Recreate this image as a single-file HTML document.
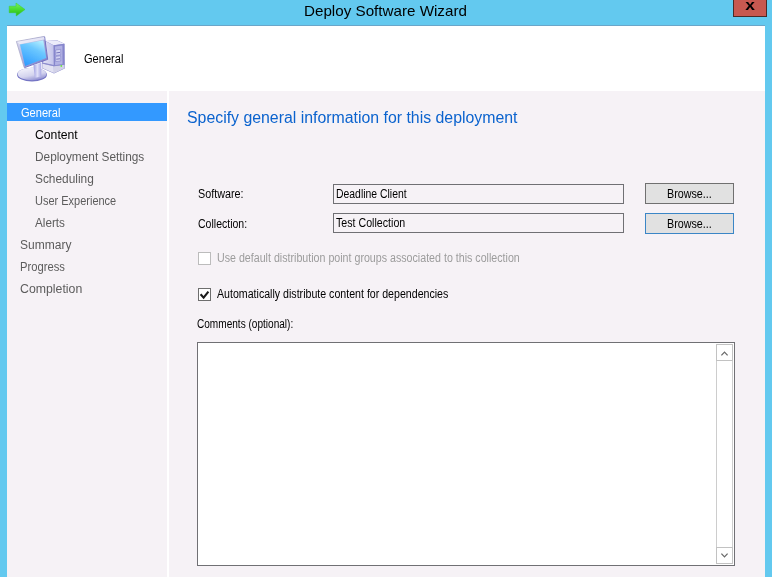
<!DOCTYPE html>
<html><head><meta charset="utf-8"><title>Deploy Software Wizard</title>
<style>
*{box-sizing:border-box;margin:0;padding:0}
html,body{width:772px;height:577px;overflow:hidden;background:#63c9ef;font-family:"Liberation Sans",sans-serif;}
.abs{position:absolute}
.tx{white-space:nowrap;line-height:1;transform-origin:0 0}
#frame{left:0;top:0;width:772px;height:577px;background:#63c9ef}
#topline{left:7px;top:25px;width:758px;height:1px;background:#6aa6c9}
#close{left:733px;top:0;width:34px;height:17px;background:#c75850;border:1px solid #4a2a28;border-top:none}
#header{left:7px;top:26px;width:758px;height:65px;background:#fff}
#body{left:7px;top:91px;width:758px;height:486px;background:#f6f2f6}
#divider{left:167px;top:91px;width:2px;height:486px;background:#fff}
#sel{left:7px;top:103px;width:160px;height:18px;background:#3399ff}
.inp{border:1px solid #707074}
.btn{background:#e1e1e1;border:1px solid #707070}
</style></head><body>
<div id="frame" class="abs"></div>
<div id="topline" class="abs"></div>
<svg id="arrow" class="abs" style="left:4px;top:0px" width="30" height="22" viewBox="4 0 30 22"><defs><linearGradient id="garr" x1="0" y1="0" x2="0" y2="1"><stop offset="0" stop-color="#78f066"/><stop offset="0.5" stop-color="#48dc30"/><stop offset="1" stop-color="#26b416"/></linearGradient><filter id="asoft"><feGaussianBlur stdDeviation="0.35"/></filter></defs><path filter="url(#asoft)" d="M9.2 6.2H16V3L25 9.5 16.2 16V12.7H9.2z" fill="url(#garr)" stroke="#3ccc28" stroke-width="0.5" stroke-linejoin="round"/></svg>
<div id="close" class="abs"></div>
<div id="closex" class="abs" style="left:733px;top:-5px;width:34px;text-align:center;font-weight:bold;font-size:15px;line-height:20px;color:#000;transform:scaleX(1.16)">x</div>
<div id="header" class="abs"></div>
<div id="body" class="abs"></div>
<svg id="pcicon" class="abs" style="left:12px;top:32px" width="60" height="56" viewBox="12 32 60 56">
<defs>
<linearGradient id="gscr" x1="0.75" y1="0" x2="0.25" y2="1"><stop offset="0" stop-color="#b4efff"/><stop offset="0.35" stop-color="#6cc8ff"/><stop offset="1" stop-color="#2f9cff"/></linearGradient>
<linearGradient id="gfrm" x1="0" y1="0" x2="1" y2="1"><stop offset="0" stop-color="#e4e4f4"/><stop offset="1" stop-color="#7474c4"/></linearGradient>
<linearGradient id="gbase" x1="0.2" y1="0" x2="0.7" y2="1"><stop offset="0" stop-color="#f4f4fc"/><stop offset="0.6" stop-color="#d4d4ee"/><stop offset="1" stop-color="#8c8cd0"/></linearGradient>
<linearGradient id="gneck" x1="0" y1="0" x2="1" y2="0"><stop offset="0" stop-color="#9c9ce0"/><stop offset="0.5" stop-color="#e0e0f8"/><stop offset="1" stop-color="#a8a8e4"/></linearGradient>
<linearGradient id="gside" x1="0" y1="0" x2="1" y2="0"><stop offset="0" stop-color="#e6e6f6"/><stop offset="1" stop-color="#c2c2ea"/></linearGradient>
<linearGradient id="gfront" x1="0" y1="0" x2="1" y2="0"><stop offset="0" stop-color="#b4b4e6"/><stop offset="1" stop-color="#8484cc"/></linearGradient>
<filter id="soft" x="-5%" y="-5%" width="110%" height="110%"><feGaussianBlur stdDeviation="0.45"/></filter>
</defs>
<g filter="url(#soft)">
<!-- tower -->
<path d="M45.3 41 L57 40.3 L64.6 43.8 L64.8 68.5 L54 73.6 L42 68.2 L42 60 Z" fill="#8a8acc"/>
<path d="M45.5 41 L57 40.5 L64.3 43.8 L53.6 45.2 Z" fill="#ececfa"/>
<path d="M45.5 41.2 L53.6 45.3 L53.8 65 L42.5 62.5 L46 58 Z" fill="url(#gside)"/>
<path d="M53.8 45.3 L64.2 44 L64.3 65.3 L53.9 66.8 Z" fill="#8686cc"/>
<path d="M55 46.6 L62.4 45.6 L62.5 64.2 L55.1 65.3 Z" fill="#b2b2e4"/>
<path d="M55.6 50 L60.7 49.3 L60.7 54.8 L55.6 55.4 Z" fill="#d2d2f2" stroke="#7676c0" stroke-width="0.5"/>
<path d="M55.6 56.4 L60.7 55.8 L60.7 61 L55.6 61.5 Z" fill="#d2d2f2" stroke="#7676c0" stroke-width="0.5"/>
<path d="M56.3 52.9 L60 52.4 M56.3 59.2 L60 58.8" stroke="#5c5cac" stroke-width="0.8" fill="none"/>
<path d="M42.3 63.5 L53.8 66.2 L53.9 73 L42.3 68 Z" fill="#e2e2f2"/>
<path d="M53.9 66.3 L64.4 64.8 L64.5 68.2 L54 73.2 Z" fill="#d2d2e8"/>
<path d="M42.3 63.2 L53.8 65.8 L64.4 64.4" stroke="#8c8ccc" stroke-width="0.7" fill="none"/>
<rect x="60.6" y="65" width="1.4" height="1.9" fill="#6ee84a"/>
<!-- base -->
<ellipse cx="32" cy="74.7" rx="14.9" ry="6.9" fill="#7474c4"/>
<ellipse cx="32" cy="74" rx="14.3" ry="6.2" fill="url(#gbase)"/>
<!-- neck -->
<path d="M33.4 65.2 L41.3 62.8 L41.3 76 Q38 77.8 34.8 77.3 Z" fill="url(#gneck)"/>
<!-- monitor -->
<path d="M16.3 41.4 L44.4 36.3 L47.6 59.3 L24.2 67.6 Z" fill="url(#gfrm)"/>
<path d="M44.6 36.6 L47.7 59.4 L24.3 67.7" fill="none" stroke="#6c6cc0" stroke-width="0.9"/>
<path d="M24.1 67.4 L16.4 41.5 L44.3 36.4" fill="none" stroke="#a4a4c4" stroke-width="0.7"/>
<path d="M17 41.8 L44 37 L44.6 39.4 L19.6 44.2 Z" fill="#f0f0fa" opacity="0.8"/>
<path d="M20 44.4 L43.3 40.2 L46.3 58 L25.1 66 Z" fill="url(#gscr)"/>
</g>
</svg>
<div id="divider" class="abs"></div>
<div id="sel" class="abs"></div>
<div id="i1" class="abs inp" style="left:333px;top:184px;width:291px;height:20px"></div>
<div id="i2" class="abs inp" style="left:333px;top:213px;width:291px;height:20px"></div>
<div id="b1" class="abs btn" style="left:645px;top:183px;width:89px;height:21px"></div>
<div id="b2" class="abs btn" style="left:645px;top:213px;width:89px;height:21px;border-color:#3b86c6"></div>
<div id="c1" class="abs" style="left:198px;top:252px;width:13px;height:13px;background:#fff;border:1px solid #bcbcbc"></div>
<div id="c2" class="abs" style="left:198px;top:288px;width:13px;height:13px;background:#fff;border:1px solid #6e6e6e"></div>
<svg id="chk" class="abs" style="left:198px;top:288px" width="13" height="13" viewBox="0 0 13 13"><path d="M2.6 6.3L5.6 9.6 10.4 3.6" fill="none" stroke="#1a1a1a" stroke-width="2.1"/></svg>
<div id="ta" class="abs inp" style="left:197px;top:342px;width:538px;height:224px;background:#fff"></div>
<div id="sb" class="abs" style="left:716px;top:344px;width:17px;height:220px;background:#fff;border:1px solid #cdcdcd"></div>
<div id="sbu" class="abs" style="left:716px;top:344px;width:17px;height:17px;border:1px solid #c2c2c2;background:#fff"></div>
<div id="sbd" class="abs" style="left:716px;top:547px;width:17px;height:17px;border:1px solid #c2c2c2;background:#fff"></div>
<svg id="sba" class="abs" style="left:716px;top:344px" width="17" height="220" viewBox="716 344 17 220"><path d="M721.4 355.4L724.5 352.1 727.6 355.4M721.4 553.6L724.5 556.9 727.6 553.6" fill="none" stroke="#6a6a6a" stroke-width="1.25"/></svg>

<div id="title" class="abs tx" style="left:304.0px;top:3px;font-size:15px;color:#000;transform:scaleX(1.0126);">Deploy Software Wizard</div>
<div id="htext" class="abs tx" style="left:83.5px;top:53px;font-size:12.5px;color:#000;transform:scaleX(0.8864);">General</div>
<div id="n0" class="abs tx" style="left:20.5px;top:107px;font-size:12.5px;color:#fff;transform:scaleX(0.8864);">General</div>
<div id="n1" class="abs tx" style="left:35px;top:129px;font-size:12.5px;color:#000;transform:scaleX(0.9767);">Content</div>
<div id="n2" class="abs tx" style="left:35px;top:151px;font-size:12.5px;color:#5c5c5c;transform:scaleX(0.9474);">Deployment Settings</div>
<div id="n3" class="abs tx" style="left:35px;top:173px;font-size:12.5px;color:#5c5c5c;transform:scaleX(0.95);">Scheduling</div>
<div id="n4" class="abs tx" style="left:35px;top:195px;font-size:12.5px;color:#5c5c5c;transform:scaleX(0.8791);">User Experience</div>
<div id="n5" class="abs tx" style="left:35px;top:217px;font-size:12.5px;color:#5c5c5c;transform:scaleX(0.9374);">Alerts</div>
<div id="n6" class="abs tx" style="left:20.0px;top:239px;font-size:12.5px;color:#5c5c5c;transform:scaleX(0.9627);">Summary</div>
<div id="n7" class="abs tx" style="left:20.0px;top:261px;font-size:12.5px;color:#5c5c5c;transform:scaleX(0.898);">Progress</div>
<div id="n8" class="abs tx" style="left:20px;top:283px;font-size:12.5px;color:#5c5c5c;transform:scaleX(0.9842);">Completion</div>
<div id="h1" class="abs tx" style="left:187.0px;top:110px;font-size:16px;color:#0b63ce;transform:scaleX(0.991);">Specify general information for this deployment</div>
<div id="l1" class="abs tx" style="left:198.0px;top:188px;font-size:12.5px;color:#000;transform:scaleX(0.8627);">Software:</div>
<div id="l2" class="abs tx" style="left:198px;top:218px;font-size:12.5px;color:#000;transform:scaleX(0.8421);">Collection:</div>
<div id="t1" class="abs tx" style="left:336.0px;top:188px;font-size:12.5px;color:#000;transform:scaleX(0.8333);">Deadline Client</div>
<div id="t2" class="abs tx" style="left:336px;top:217px;font-size:12.5px;color:#000;transform:scaleX(0.8519);">Test Collection</div>
<div id="bt1" class="abs tx" style="left:667.0px;top:188px;font-size:12.5px;color:#000;transform:scaleX(0.86);">Browse...</div>
<div id="bt2" class="abs tx" style="left:667.0px;top:218px;font-size:12.5px;color:#000;transform:scaleX(0.86);">Browse...</div>
<div id="cl1" class="abs tx" style="left:217.0px;top:252px;font-size:12.5px;color:#9c9c9c;transform:scaleX(0.8527);">Use default distribution point groups associated to this collection</div>
<div id="cl2" class="abs tx" style="left:217.0px;top:288px;font-size:12.5px;color:#000;transform:scaleX(0.8493);">Automatically distribute content for dependencies</div>
<div id="l3" class="abs tx" style="left:197px;top:318px;font-size:12.5px;color:#000;transform:scaleX(0.8052);">Comments (optional):</div>
</body></html>
